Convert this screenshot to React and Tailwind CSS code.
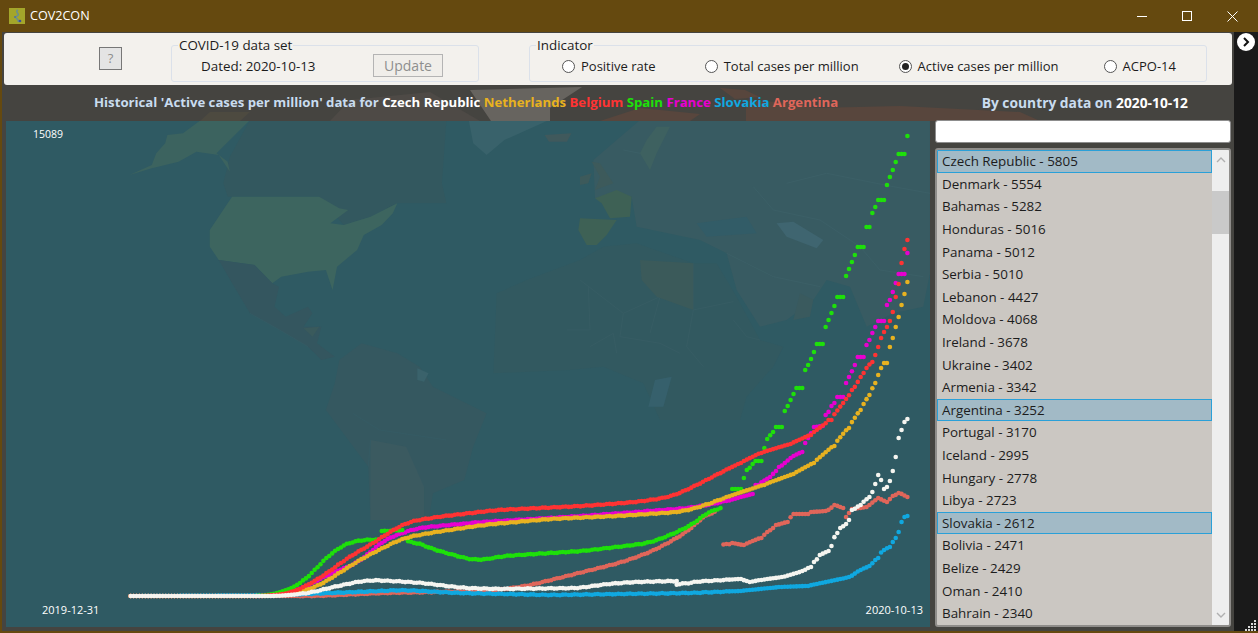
import React from "react";

const font = { fontFamily: '"Open Sans", "Noto Sans", sans-serif' };

const series = [
  { c: "#e0665a", segs: [
    [[130,596],[317,596],[383,593],[490,591],[527,586],[583,572],[623,562],[653,551],[677,538],[690,530],[700,520],[716,505]],
    [[724,546],[732,543],[743,545],[760,538],[768,532],[777,525],[787,522],[793,514],[807,514],[812,512],[827,511],[835,505],[843,508]],
    [[845,517],[853,509],[867,507],[878,498],[887,502],[893,496],[900,493],[907,497]],
  ]},
  { c: "#10a8e0", segs: [
    [[130,596],[280,595],[357,592],[403,590],[457,593],[550,595],[690,593],[740,591],[780,587],[807,586],[850,577],[860,570],[870,566],[877,558],[883,550],[890,547],[895,538],[898,532],[901,522],[904,517],[907,516]],
  ]},
  { c: "#e800d0", segs: [
    [[130,596],[270,596],[300,590],[327,575],[360,562],[383,540],[417,528],[483,522],[583,516],[690,508],[723,502],[752,494]],
    [[757,485],[770,477],[780,467],[793,456],[802,452],[805,443],[815,427],[823,426],[827,415],[833,403],[837,397],[843,397],[846,383],[850,377],[854,365],[857,357],[863,357],[866,345],[869,340],[872,333],[875,327],[878,321],[884,321],[887,305],[889,300],[892,292],[895,283],[898,274],[904,274],[907,253]],
  ]},
  { c: "#1ee00a", segs: [
    [[130,596],[262,596],[280,593],[303,583],[318,566],[337,548],[353,541],[376,539]],
    [[383,532],[403,529]],
    [[407,539],[417,542],[423,546],[453,555],[477,561],[503,556],[583,551],[650,543],[680,531],[693,524],[703,517],[713,507],[720,507]],
    [[732,489],[740,489],[743,478],[748,470],[755,461],[760,461],[763,448],[768,439],[772,432],[775,427],[782,427],[784,411],[787,406],[790,400],[793,394],[795,388],[802,388],[804,370],[807,365],[810,359],[813,352],[816,344],[822,344],[825,327],[828,320],[831,313],[834,306],[837,297],[843,297],[845,276],[848,269],[851,262],[854,255],[857,247],[863,247],[866,227],[869,227],[872,213],[875,207],[878,200],[883,200],[887,185],[890,177],[892,170],[895,162],[898,154],[904,154],[907,136]],
  ]},
  { c: "#e8b220", segs: [
    [[130,596],[270,596],[295,593],[317,587],[363,558],[383,548],[403,538],[430,533],[483,525],[550,519],[617,516],[680,512],[700,507],[730,496],[763,485],[793,474],[813,463],[833,446],[848,428],[860,410],[869,395],[875,383],[881,368],[884,363],[887,363],[889,347],[892,338],[895,327],[898,317],[901,305],[904,294],[907,282]],
  ]},
  { c: "#ff3333", segs: [
    [[130,596],[270,596],[295,592],[325,575],[347,558],[367,547],[390,532],[407,522],[437,517],[497,510],[583,506],[637,502],[670,497],[680,493],[697,485],[720,473],[740,463],[760,453],[790,444],[810,435],[830,420],[843,403],[853,390],[863,373],[866,368],[872,362],[875,355],[878,347],[881,338],[884,332],[887,327],[889,321],[892,312],[895,297],[898,284],[901,263],[904,249],[907,240]],
  ]},
  { c: "#f5f5f0", segs: [
    [[130,596],[280,596],[310,593],[333,587],[367,580],[393,581],[423,583],[463,588],[500,589],[583,588],[597,585],[633,582],[676,581]],
    [[678,586],[690,582],[707,581],[740,579],[750,582],[760,580],[783,577],[803,571],[810,567],[815,562],[820,555],[828,551],[831,546],[836,533],[840,528],[847,524],[848,520],[853,510],[860,505],[869,497],[872,492],[875,484],[878,475],[881,480],[883,489],[887,487],[889,481],[892,471],[895,457],[898,438],[901,430],[904,422],[907,419]],
  ]},
];

function dots(pts) {
  const out = [];
  const first = pts[0][0];
  const last = pts[pts.length - 1][0];
  for (let i = 0; i < 300; i++) {
    const x = 907.4 - i * 2.92;
    if (x < first - 1.5) break;
    if (x > last + 1.5) continue;
    let y = null;
    let best = 1.5;
    if (x > 730) {
      for (const p of pts) {
        const d = Math.abs(p[0] - x);
        if (d < best) { best = d; y = p[1]; }
      }
    }
    if (y === null) {
      y = x > last ? pts[pts.length - 1][1] : pts[0][1];
      for (let k = 0; k < pts.length - 1; k++) {
        const a = pts[k], b = pts[k + 1];
        if (x >= a[0] && x <= b[0]) {
          y = a[1] + ((x - a[0]) / (b[0] - a[0])) * (b[1] - a[1]);
          break;
        }
      }
    }
    out.push([x, y]);
  }
  return out.map(([x, y], i) => {
    if (x > 730) return [x, y];
    let sum = 0, n = 0;
    for (let j = i - 4; j <= i + 4; j++) {
      if (out[j]) { sum += out[j][1]; n++; }
    }
    const wobble = x > 300 ? Math.sin(i * 1.7) * 0.35 : 0;
    return [x, sum / n + wobble];
  });
}

const countries = [
  ["Czech Republic - 5805", true], ["Denmark - 5554"], ["Bahamas - 5282"], ["Honduras - 5016"], ["Panama - 5012"],
  ["Serbia - 5010"], ["Lebanon - 4427"], ["Moldova - 4068"], ["Ireland - 3678"], ["Ukraine - 3402"], ["Armenia - 3342"],
  ["Argentina - 3252", true], ["Portugal - 3170"], ["Iceland - 2995"], ["Hungary - 2778"], ["Libya - 2723"],
  ["Slovakia - 2612", true], ["Bolivia - 2471"], ["Belize - 2429"], ["Oman - 2410"], ["Bahrain - 2340"],
];

function MapWest() {
  return (
    <g transform="translate(0,120) scale(0.4464,0.3333)">
      <path fill="#33585f" d="M510 230L500 190L515 110L560 0L1000 0L990 190L1000 250L890 250L830 290L770 315L715 230Z" />
      <path fill="#3c635f" d="M290 165L340 135L350 100L370 70L375 45L410 40L450 0L560 0L485 100L510 125L515 155L490 105L440 95L400 125L340 145Z" />
      <path fill="#39626b" d="M1050 0L1230 0L1130 60L1090 105L1060 70Z" />
      <path fill="#40595c" d="M1220 45L1280 40L1270 65L1230 65Z" />
      <path fill="#3d655f" d="M520 230L715 230L760 265L780 270L740 310L770 315L830 290L890 250L880 280L855 315L815 345L800 390L755 440L745 510L730 450L690 455L630 470L610 490L570 435L490 420L470 380L470 330L510 250Z" />
      <path fill="#34565f" d="M490 420L570 435L610 490L625 500L615 560L640 590L690 560L700 580L680 620L720 620L710 670L750 710L720 720L690 680L620 625L560 580L520 490Z" />
      <path fill="#355860" d="M760 720L810 670L890 700L940 740L970 800L1090 880L1060 980L1040 1080L970 1120L960 1200L830 1200L825 1040L730 870L750 790Z" />
      <path fill="#3b5a60" d="M830 960L910 980L950 1100L950 1200L830 1200Z" />
      <path fill="#3a626b" d="M935 745L960 760L950 785L935 780Z" />
      <path fill="#3a5a5c" d="M680 625L715 620L700 650Z" />
      <path fill="none" stroke="#355b64" strokeWidth="2" d="M560 580L620 625L690 680M790 880L850 930L1000 960M830 960L825 1040" />
    </g>
  );
}

function MapEast() {
  return (
    <g transform="translate(560,120) scale(0.3333)">
      <path fill="#385b62" d="M100 120L240 0L1110 0L1110 460L1090 560L1000 580L920 620L870 500L800 480L760 540L680 600L600 620L530 510L500 400L420 360L230 320L215 230L105 235Z" />
      <path fill="#325960" d="M-200 760L-190 520L-100 480L60 420L130 380L230 370L400 430L470 430L530 530L600 660L670 680L640 740L560 830L540 900L300 900L250 790L130 740L30 750Z" />
      <path fill="none" stroke="#375d64" strokeWidth="2.5" d="M60 480L190 580L300 530M85 500L90 630L20 630M190 580L180 650M400 430L400 570L520 545M270 640L300 530M90 680L160 640L170 700M180 650L300 670L360 700M400 570L380 680L430 740M600 660L560 650L520 600" />
      <path fill="#3e6155" d="M105 235L170 210L215 230L210 290L150 295L125 250Z" />
      <path fill="#3e6155" d="M60 295L170 300L140 345L110 375L80 375L55 330Z" />
      <path fill="#3d5a5b" d="M95 125L120 130L160 190L105 210L120 170Z" />
      <path fill="#3d5a5b" d="M60 170L95 160L85 190L60 195Z" />
      <path fill="#3e6160" d="M260 60L290 20L330 20L290 100L270 150L240 100Z" />
      <path fill="#3f6570" d="M650 310L700 305L790 360L770 385L680 350Z" />
      <path fill="#3b5a5a" d="M240 420L400 430L400 570L290 530L245 480Z" />
      <path fill="#3a5a5e" d="M700 600L720 520L760 540L750 590Z" />
      <path fill="#36606c" d="M285 780L335 770L310 860L265 860Z" />
      <path fill="#325c67" d="M410 310L560 290L590 340L440 350Z" />
      <path fill="none" stroke="#3c6067" strokeWidth="2.5" d="M240 100L190 90M680 190L800 160L1000 200L1110 220M580 200L640 270L780 300L900 380L960 450L1090 470M500 400L560 430L640 470L780 500" />
    </g>
  );
}

function Radio({ on, label, ml }) {
  return (
    <div className={`flex items-center gap-[6px] ${ml}`}>
      <div className="w-[13px] h-[13px] rounded-full border border-[#555] bg-white flex items-center justify-center">
        {on && <div className="w-[7px] h-[7px] rounded-full bg-[#222]" />}
      </div>
      <span>{label}</span>
    </div>
  );
}

export default function App() {
  return (
    <div style={font} className="w-[1258px] h-[633px] bg-[#65490f] flex flex-col overflow-hidden text-[13.4px] text-[#1c1c1c]">
      <div className="h-[32px] shrink-0 flex items-center pl-[9px] text-white text-[12.6px]">
        <svg width="16" height="16" viewBox="0 0 16 16" className="mr-[5px]">
          <rect width="16" height="16" fill="#a4a62a" />
          <path d="M9 2C5 4 12 6 8 8C4 10 11 11 9 14" fill="none" stroke="#6c8f8a" strokeWidth="1.6" />
          <circle cx="11" cy="13" r="1.3" fill="#3d4f9a" />
          <circle cx="6" cy="9" r="1" fill="#55739a" />
        </svg>
        <span>COV2CON</span>
        <div className="ml-auto flex items-center">
          <div className="w-[10px] h-px bg-white mr-[35px]" />
          <div className="w-[10px] h-[10px] border border-white mr-[35px]" />
          <svg width="11" height="11" viewBox="0 0 11 11" className="mr-[20px]">
            <path d="M0.5 0.5L10.5 10.5M10.5 0.5L0.5 10.5" stroke="white" strokeWidth="1" />
          </svg>
        </div>
      </div>

      <div className="h-[599px] shrink-0 flex">
        <div className="w-[1232px] ml-[2px] bg-[#454440] flex flex-col shrink-0 relative">
          <svg className="absolute left-0 top-[52px]" width="1232" height="37" viewBox="2 84 1232 37">
            <path fill="#67645f" d="M470 90L582 87L550 108L550 121L491 121Z" />
            <path fill="#58463d" d="M720 88L745 90L760 97L735 99ZM746 100L790 103L815 108L900 106L1020 112L1040 121L746 121Z" />
            <path fill="#4d4a40" d="M200 121L210 112L250 112L240 121Z" />
            <path fill="#4e4a46" d="M330 121L350 100L430 92L480 121Z" />
            <path fill="#58463d" d="M600 121L640 108L700 114L690 121Z" />
          </svg>

          <div className="relative z-10 h-[52px] mt-px mx-[2px] shrink-0 bg-[#f3f1ed] rounded-[3px] flex items-start">
            <div className="ml-[95px] mt-[14px] w-[23px] h-[23px] bg-[#e4e4e4] border border-[#777] flex items-center justify-center text-[#8d8d8d] text-[13px]">?</div>
            <fieldset className="ml-[49px] mt-[4px] w-[308px] h-[45px] border border-[#dbe1ea] rounded-[3px]">
              <legend className="ml-[6px] -mb-px px-[1px] leading-[17px] whitespace-nowrap">COVID-19 data set</legend>
              <span className="absolute left-[197px] top-[23px] whitespace-nowrap">Dated: 2020-10-13</span>
              <div className="absolute left-[369px] top-[21px] w-[70px] h-[23px] border border-[#b4b4b4] bg-[#f0eeea] text-[#8e8e8e] flex items-center justify-center text-[14px]">Update</div>
            </fieldset>
            <fieldset className="ml-[50px] mt-[4px] w-[678px] h-[45px] border border-[#dbe1ea] rounded-[3px] flex items-center">
              <legend className="ml-[6px] -mb-px px-[1px] leading-[17px]">Indicator</legend>
              <div className="flex items-center -mt-[1px] text-[13px]">
                <Radio label="Positive rate" ml="ml-[32px]" />
                <Radio label="Total cases per million" ml="ml-[49px]" />
                <Radio on label="Active cases per million" ml="ml-[40px]" />
                <Radio label="ACPO-14" ml="ml-[45px]" />
              </div>
            </fieldset>
          </div>

          <div className="relative z-10 h-[36px] shrink-0 flex items-center font-bold text-[13.2px] text-[#c9dcef]">
            <div className="ml-[92px] whitespace-nowrap">
              Historical 'Active cases per million' data for <span className="text-white">Czech Republic</span>{" "}
              <span className="text-[#e8b220]">Netherlands</span> <span className="text-[#ff3333]">Belgium</span>{" "}
              <span className="text-[#1ee00a]">Spain</span> <span className="text-[#e800d0]">France</span>{" "}
              <span className="text-[#10a8e0]">Slovakia</span> <span className="text-[#e0665a]">Argentina</span>
            </div>
            <div className="ml-auto mr-[46px] whitespace-nowrap text-[13.8px]">
              By country data on <span className="text-white">2020-10-12</span>
            </div>
          </div>

          <div className="relative z-10 flex-1 flex pl-[4px] pb-[4px] min-h-0">
            <div className="relative w-[924px] h-[506px] bg-[#2f5a63] shrink-0 overflow-hidden">
              <svg className="block" width="924" height="506" viewBox="6 121 924 506">
                <MapWest />
                <MapEast />
                {series.map((s, i) => (
                  <g key={i} fill={s.c}>
                    {s.segs.flatMap((seg, j) =>
                      dots(seg).map(([x, y], k) => <circle key={j + "-" + k} cx={x} cy={y} r="2.3" />)
                    )}
                  </g>
                ))}
              </svg>
              <span className="absolute left-[27px] top-[6px] text-white text-[10.5px]">15089</span>
              <span className="absolute left-[36px] bottom-[9px] text-white text-[11px]">2019-12-31</span>
              <span className="absolute right-[7px] bottom-[9px] text-white text-[11px]">2020-10-13</span>
            </div>

            <div className="ml-[5px] w-[296px] flex flex-col -mt-[1px]">
              <div className="h-[23px] bg-white border border-[#8d8d8d] rounded-[3px] shrink-0" />
              <div className="mt-[5px] h-[479px] border-2 border-[#8f8d8a] rounded-[3px] bg-[#cbc7c2] flex overflow-hidden">
                <div className="w-[275px] shrink-0 flex flex-col text-[13.4px]">
                  {countries.map(([t, sel]) => (
                    <div
                      key={t}
                      className={`h-[22.6px] shrink-0 flex items-center pl-[4px] whitespace-nowrap ${sel ? "bg-[#a2bac6] border border-[#2aa0d8]" : "border border-transparent"}`}
                    >
                      {t}
                    </div>
                  ))}
                </div>
                <div className="flex-1 bg-[#eeeeee] flex flex-col items-center justify-between relative">
                  <svg width="10" height="6" viewBox="0 0 10 6" className="mt-[7px]"><path d="M1 5L5 1L9 5" fill="none" stroke="#b0b0b0" strokeWidth="1.4" /></svg>
                  <div className="absolute left-0 right-0 top-[41px] h-[43px] bg-[#c9c9c9]" />
                  <svg width="10" height="6" viewBox="0 0 10 6" className="mb-[7px]"><path d="M1 1L5 5L9 1" fill="none" stroke="#b0b0b0" strokeWidth="1.4" /></svg>
                </div>
              </div>
            </div>
          </div>
        </div>

        <div className="flex-1 bg-[#1a1a1a] relative">
          <div className="absolute left-[3px] top-[1px] w-[18px] h-[18px] rounded-full bg-white flex items-center justify-center">
            <svg width="8" height="10" viewBox="0 0 8 10"><path d="M2 1L6 5L2 9" fill="none" stroke="#111" strokeWidth="2" /></svg>
          </div>
          <svg className="absolute right-[2px] bottom-0" width="11" height="11" viewBox="0 0 11 11" fill="#d8d8d8">
            <rect x="9" y="0" width="2" height="2" /><rect x="6" y="3" width="2" height="2" /><rect x="9" y="3" width="2" height="2" />
            <rect x="3" y="6" width="2" height="2" /><rect x="6" y="6" width="2" height="2" /><rect x="9" y="6" width="2" height="2" />
            <rect x="0" y="9" width="2" height="2" /><rect x="3" y="9" width="2" height="2" /><rect x="6" y="9" width="2" height="2" /><rect x="9" y="9" width="2" height="2" />
          </svg>
        </div>
      </div>
    </div>
  );
}
